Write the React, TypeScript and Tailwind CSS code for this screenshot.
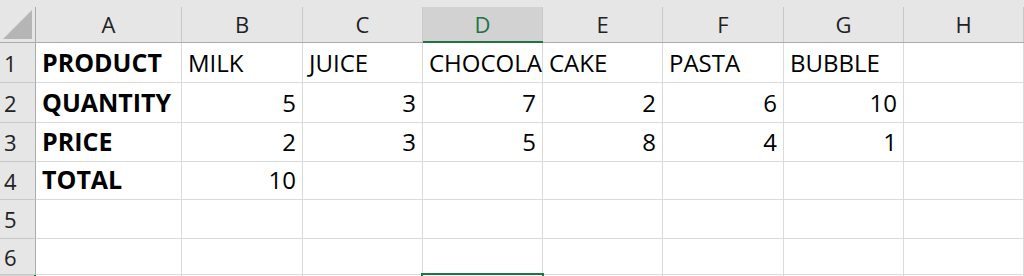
import React from 'react';

const cols = ['A', 'B', 'C', 'D', 'E', 'F', 'G', 'H'];
const selectedCol = 3;

const rows: (string | number)[][] = [
    ['PRODUCT', 'MILK', 'JUICE', 'CHOCOLATE', 'CAKE', 'PASTA', 'BUBBLE', ''],
    ['QUANTITY', 5, 3, 7, 2, 6, 10, ''],
    ['PRICE', 2, 3, 5, 8, 4, 1, ''],
    ['TOTAL', 10, '', '', '', '', '', ''],
    ['', '', '', '', '', '', '', ''],
    ['', '', '', '', '', '', '', ''],
    ['', '', '', '', '', '', '', ''],
];

const rowHeights = ['h-[40px]', 'h-[40px]', 'h-[39px]', 'h-[38px]', 'h-[39px]', 'h-[36px]', 'h-[12px]'];

const gridCols = 'grid grid-cols-[36px_146px_121px_120px_120px_120px_121px_120px_120px]';

function HeaderRow() {
    return (
        <div className={`${gridCols} h-[43px] bg-[#e6e6e6]`}>
            {/* corner */}
            <div className="flex flex-col border-b border-[#ababab]">
                <div className="h-[7px]" />
                <div className="flex flex-1 items-end justify-end border-r border-[#ababab] pr-[3px] pb-[3px]">
                    <svg width="29" height="29" viewBox="0 0 29 29">
                        <polygon points="29,0 29,29 0,29" fill="#b5b5b5" />
                    </svg>
                </div>
            </div>
            {cols.map((c, i) => {
                const sel = i === selectedCol;
                return (
                    <div
                        key={c}
                        className={`flex flex-col ${sel ? 'border-b-2 border-[#217346]' : 'border-b border-[#ababab]'}`}
                    >
                        <div className="h-[7px]" />
                        <div
                            className={`flex flex-1 items-center justify-center border-r border-[#c9c9c9] pb-px text-[22px] ${
                                sel ? 'bg-[#d2d2d2] text-[#217346]' : 'text-[#222]'
                            }`}
                        >
                            {c}
                        </div>
                    </div>
                );
            })}
        </div>
    );
}

export default function App() {
    return (
        <div className="h-[276px] w-[1024px] overflow-hidden bg-white font-['Open_Sans','Noto_Sans',sans-serif] leading-none text-black">
            <HeaderRow />
            {rows.map((row, r) => {
                const last = r === rows.length - 1;
                return (
                    <div key={r} className={`${gridCols} ${rowHeights[r]}`}>
                        <div
                            className={`flex items-center pl-[4px] text-[22px] text-[#222] border-b border-[#c9c9c9] ${
                                last ? 'bg-[#d2d2d2] border-r-2 border-r-[#217346]' : 'bg-[#e6e6e6] border-r border-r-[#ababab]'
                            }`}
                        >
                            {r + 1}
                        </div>
                        {row.map((v, c) => {
                            const isNum = typeof v === 'number';
                            const sel = last && c === selectedCol;
                            return (
                                <div
                                    key={c}
                                    className={`relative flex items-end whitespace-nowrap border-r border-b border-[#dadada] px-[6px] pb-[7px] ${
                                        isNum ? 'justify-end' : 'justify-start'
                                    } ${c === 0 ? 'text-[25px] font-bold' : 'text-[24px]'} ${v !== '' ? 'overflow-hidden' : ''}`}
                                >
                                    {v !== '' && <span>{v}</span>}
                                    {sel && (
                                        <div className="absolute -top-[2px] -left-[2px] h-[40px] w-[123px] border-2 border-[#217346]" />
                                    )}
                                </div>
                            );
                        })}
                    </div>
                );
            })}
        </div>
    );
}
